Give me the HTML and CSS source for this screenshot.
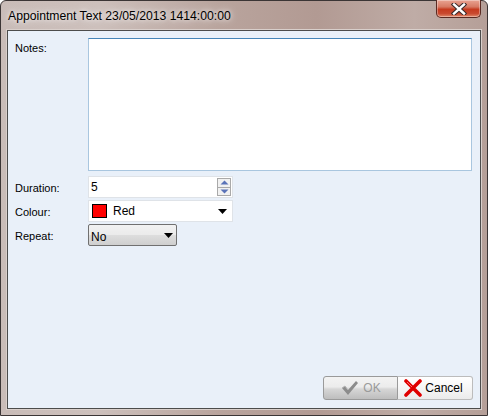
FILE: index.html
```html
<!DOCTYPE html>
<html>
<head>
<meta charset="utf-8">
<link rel="stylesheet" href="styles.css">
</head>
<body>
<div class="window">
  <div class="titlebar">
    <span class="title">Appointment Text 23/05/2013 1414:00:00</span>
    <div class="close">
      <svg width="16" height="12" viewBox="0 0 16 12"><path d="M3 1.5 L13 10.5 M13 1.5 L3 10.5" stroke="#3a2a2a" stroke-width="4.5" stroke-linecap="square"/><path d="M3 1.5 L13 10.5 M13 1.5 L3 10.5" stroke="#ffffff" stroke-width="2.4" stroke-linecap="square"/></svg>
    </div>
  </div>
  <div class="client">
    <div class="form">
      <label class="lbl notes-lbl">Notes:</label>
      <div class="textarea"></div>
      <label class="lbl">Duration:</label>
      <div class="field spin-field">
        <span class="val">5</span>
        <div class="spin">
          <div class="sb"><svg width="9" height="5" viewBox="0 0 9 5"><path d="M0.5 4.5 L4.5 0.5 L8.5 4.5Z" fill="#5a73b8"/></svg></div>
          <div class="sb"><svg width="9" height="5" viewBox="0 0 9 5"><path d="M0.5 0.5 L4.5 4.5 L8.5 0.5Z" fill="#5a73b8"/></svg></div>
        </div>
      </div>
      <label class="lbl">Colour:</label>
      <div class="field combo">
        <span class="swatch"></span>
        <span class="val">Red</span>
        <svg class="arrow" width="9" height="5" viewBox="0 0 9 5"><path d="M0 0 H9 L4.5 5Z" fill="#000"/></svg>
      </div>
      <label class="lbl">Repeat:</label>
      <div class="dropbtn">
        <span class="val">No</span>
        <svg class="arrow" width="9" height="5" viewBox="0 0 9 5"><path d="M0 0 H9 L4.5 5Z" fill="#000"/></svg>
      </div>
    </div>
    <div class="buttons">
      <div class="btn ok">
        <svg width="20" height="18" viewBox="0 0 20 18"><path d="M2 9 L5 7 L8 11 L16 2 L18 4 L8 16 Z" fill="#8c8c8c"/><path d="M2 9 L5 7 L8 11" stroke="#b5b5b5" stroke-width="1" fill="none"/></svg>
        <span>OK</span>
      </div>
      <div class="btn cancel">
        <svg width="18" height="18" viewBox="0 0 18 18"><path d="M2 2 L16 16 M16 2 L2 16" stroke="#e00000" stroke-width="3.6" stroke-linecap="round"/><path d="M3 3 L8 8" stroke="#ff6a6a" stroke-width="1" /></svg>
        <span>Cancel</span>
      </div>
    </div>
  </div>
</div>
</body>
</html>
```
FILE: styles.css
```css
html, body {
  margin: 0;
  padding: 0;
  background: #ffffff;
}
body {
  width: 488px;
  height: 416px;
  overflow: hidden;
  font-family: "Liberation Sans", Arial, sans-serif;
}
.window {
  width: 488px;
  height: 416px;
  box-sizing: border-box;
  border: 1px solid #3b3535;
  border-radius: 6px 6px 0 0;
  background: linear-gradient(90deg, #c9bcb8 0%, #cdc0bc 20%, #b9a49d 45%, #b29a93 65%, #bfaca6 85%, #b59f98 100%);
  padding: 0 6px 6px 6px;
  display: flex;
  flex-direction: column;
}
.titlebar {
  height: 29px;
  display: flex;
  align-items: flex-start;
  justify-content: space-between;
}
.title {
  margin-top: 8px;
  margin-left: 1px;
  font-family: "Liberation Sans", Arial, sans-serif;
  font-size: 12.2px;
  color: #000;
  text-shadow: 0 0 8px rgba(255,255,255,0.9), 0 0 4px rgba(255,255,255,0.8);
}
.close {
  width: 45px;
  height: 18px;
  margin-top: -1px;
  box-sizing: border-box;
  border: 1px solid #5a2a22;
  border-top: none;
  border-radius: 0 0 5px 5px;
  background: linear-gradient(180deg, #e9a392 0%, #d77a64 40%, #c63a1f 55%, #c94a30 80%, #e08a6c 100%);
  display: flex;
  align-items: center;
  justify-content: center;
  box-shadow: inset 0 0 0 1px rgba(255,255,255,0.35);
}
.client {
  flex: 1;
  background: #e9f0f9;
  border: 1px solid #4c4c4c;
  box-shadow: 0 0 0 1px #d9cfcb;
  display: flex;
  flex-direction: column;
  justify-content: space-between;
  padding: 7px 7px 8px 7px;
}
.form {
  display: grid;
  grid-template-columns: 73px 384px;
  grid-template-rows: 136px 22px 22px 22px;
  row-gap: 2px;
}
.lbl {
  font-size: 11px;
  color: #000;
  margin-left: 0;
  align-self: center;
  margin-top: 1px;
}
.notes-lbl {
  align-self: start;
  margin-top: 4px;
}
.textarea {
  height: 133px;
  box-sizing: border-box;
  background: #fff;
  border: 1px solid #a9c6df;
  border-top-color: #4585b9;
}
.field {
  width: 145px;
  box-sizing: border-box;
  background: #fff;
  border: 1px solid #dfe3e8;
  display: flex;
  align-items: center;
  font-size: 12px;
}
.val {
  font-size: 12px;
  color: #000;
}
.spin-field .val { margin-left: 2px; flex: 1; }
.spin {
  width: 14px;
  height: 18px;
  display: flex;
  flex-direction: column;
  margin-right: 1px;
  border: 1px solid #a9a9a9;
  box-sizing: border-box;
}
.sb {
  flex: 1;
  display: flex;
  align-items: center;
  justify-content: center;
  background: #f1f1f1;
}
.sb + .sb { border-top: 1px solid #a9a9a9; }
.combo .swatch {
  width: 13px;
  height: 12px;
  background: #ff0000;
  border: 1px solid #000;
  margin-left: 3px;
  margin-right: 6px;
}
.combo .val { flex: 1; }
.combo .arrow { margin-right: 5px; }
.dropbtn {
  width: 89px;
  box-sizing: border-box;
  border: 1px solid #707070;
  border-radius: 2px;
  background: linear-gradient(180deg, #f2f2f2 0%, #ebebeb 48%, #dddddd 52%, #cfcfcf 100%);
  display: flex;
  align-items: center;
  justify-content: space-between;
  padding: 0 3px 0 2px;
}
.dropbtn .val { margin-top: 3px; }
.buttons {
  display: flex;
  justify-content: flex-end;
}
.btn {
  width: 75px;
  height: 24px;
  box-sizing: border-box;
  border: 1px solid #a8a8a8;
  display: flex;
  align-items: center;
  justify-content: center;
  gap: 3px;
  font-size: 12px;
}
.btn.ok {
  border-radius: 3px 0 0 3px;
  border-color: #9a9a9a;
  background: linear-gradient(180deg, #f3f3f3 0%, #ececec 45%, #d6d6d6 55%, #bdbdbd 100%);
  color: #9a9a9a;
}
.btn.cancel {
  border-radius: 0 3px 3px 0;
  border-left: none;
  border-color: #bcbcbc;
  background: linear-gradient(180deg, #ffffff 0%, #f6f6f6 50%, #ebebeb 100%);
  color: #000;
}
.btn.cancel svg { margin-left: -3px; }
```
